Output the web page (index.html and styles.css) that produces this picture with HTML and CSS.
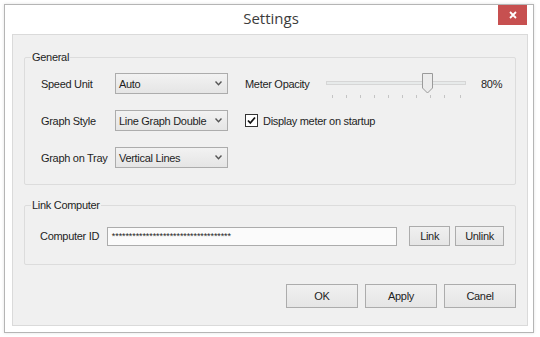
FILE: index.html
```html
<!DOCTYPE html>
<html lang="en">
  <head>
    <meta charset="UTF-8" />
    <title>Settings</title>
    <link rel="stylesheet" href="styles.css">
  </head>
  <body>
    <div class="window">
      <div class="titlebar">
        <span></span>
        <span class="title">Settings</span>
        <button class="close" title="Close">
          <svg width="8" height="8" viewBox="0 0 8 8">
            <path d="M1 1 L7 7 M7 1 L1 7" stroke="#fff" stroke-width="1.8" />
          </svg>
        </button>
      </div>

      <div class="client">
        <fieldset class="group">
          <legend>General</legend>
          <div class="general-grid">
            <span class="label">Speed Unit</span>
            <div class="combo">
              <span>Auto</span>
              <svg class="chev" width="7" height="5" viewBox="0 0 7 5"><path d="M0.5 0.5 L3.5 3.8 L6.5 0.5" fill="none" stroke="#555" stroke-width="1.4" /></svg>
            </div>
            <div class="right-cell">
              <span class="opacity-label">Meter Opacity</span>
              <svg class="slider" width="140" height="26" viewBox="0 0 140 26">
                <rect x="0.5" y="8.5" width="139" height="3" fill="#e7eaea" stroke="#d6d6d6" />
                <g stroke="#c4c4c4" stroke-width="1">
                  <line x1="6.5" y1="22" x2="6.5" y2="25" />
                  <line x1="20.5" y1="22" x2="20.5" y2="25" />
                  <line x1="34.5" y1="22" x2="34.5" y2="25" />
                  <line x1="48.5" y1="22" x2="48.5" y2="25" />
                  <line x1="62.5" y1="22" x2="62.5" y2="25" />
                  <line x1="76.5" y1="22" x2="76.5" y2="25" />
                  <line x1="90.5" y1="22" x2="90.5" y2="25" />
                  <line x1="104.5" y1="22" x2="104.5" y2="25" />
                  <line x1="118.5" y1="22" x2="118.5" y2="25" />
                  <line x1="134.5" y1="22" x2="134.5" y2="25" />
                </g>
                <path d="M96.5 0.5 H106.5 V15 L101.5 20 L96.5 15 Z" fill="#ececec" stroke="#9a9a9a" />
              </svg>
              <span class="percent">80%</span>
            </div>

            <span class="label">Graph Style</span>
            <div class="combo">
              <span>Line Graph Double</span>
              <svg class="chev" width="7" height="5" viewBox="0 0 7 5"><path d="M0.5 0.5 L3.5 3.8 L6.5 0.5" fill="none" stroke="#555" stroke-width="1.4" /></svg>
            </div>
            <div class="right-cell">
              <span class="checkbox">
                <svg width="11" height="11" viewBox="0 0 11 11"><path d="M2 5.5 L4.3 8 L9 2.5" fill="none" stroke="#111" stroke-width="1.8" /></svg>
              </span>
              <span class="check-label">Display meter on startup</span>
            </div>

            <span class="label">Graph on Tray</span>
            <div class="combo">
              <span>Vertical Lines</span>
              <svg class="chev" width="7" height="5" viewBox="0 0 7 5"><path d="M0.5 0.5 L3.5 3.8 L6.5 0.5" fill="none" stroke="#555" stroke-width="1.4" /></svg>
            </div>
            <div class="right-cell"></div>
          </div>
        </fieldset>

        <fieldset class="group link-group">
          <legend>Link Computer</legend>
          <div class="link-row">
            <span class="label id-label">Computer ID</span>
            <div class="textbox">***********************************</div>
            <button class="btn small">Link</button>
            <button class="btn small unlink">Unlink</button>
          </div>
        </fieldset>

        <div class="actions">
          <button class="btn big">OK</button>
          <button class="btn big">Apply</button>
          <button class="btn big">Canel</button>
        </div>
      </div>
    </div>
  </body>
</html>
```

FILE: styles.css
```css
body {
  margin: 0;
  padding: 4px;
  background-color: #fff;
  font-family: 'Liberation Sans', 'DejaVu Sans', sans-serif;
  font-size: 11px;
  letter-spacing: -0.3px;
  color: #1e1e1e;
}

.window {
  width: 530px;
  height: 329px;
  box-sizing: border-box;
  border: 1px solid #b5b5b5;
  background-color: #fff;
  box-shadow: 0 0 3px rgba(0, 0, 0, 0.12);
}

/* title bar */
.titlebar {
  height: 29px;
  display: grid;
  grid-template-columns: 1fr auto 1fr;
  align-items: start;
}

.title {
  font-family: 'Open Sans', 'Noto Sans', sans-serif;
  font-size: 15px;
  letter-spacing: 0;
  line-height: 27px;
  color: #3c3c3c;
  padding-left: 4px;
}

.close {
  justify-self: end;
  margin-right: 6px;
  width: 29px;
  height: 20px;
  border: none;
  padding: 0;
  background-color: #c75050;
  display: flex;
  align-items: center;
  justify-content: center;
}

/* grey client area */
.client {
  margin: 0 5px 0 7px;
  height: 292px;
  box-sizing: border-box;
  border: 1px solid #dadada;
  background-color: #f0f0f0;
  padding: 15px 11px 0 11px;
}

.group {
  margin: 0;
  padding: 9px 0 16px 16px;
  border: 1px solid #dcdcdc;
  border-radius: 2px;
  min-width: 0;
}

.group legend {
  margin-left: -10px;
  padding: 0 1px;
  line-height: 14px;
  color: #1e1e1e;
}

.general-grid {
  display: grid;
  grid-template-columns: 74px 113px auto;
  grid-auto-rows: 21px;
  row-gap: 16px;
  align-items: center;
}

.label {
  white-space: nowrap;
}

.combo {
  height: 21px;
  box-sizing: border-box;
  border: 1px solid #acacac;
  background: linear-gradient(#f2f2f2, #e5e5e5);
  display: flex;
  align-items: center;
  padding: 0 5px 0 3px;
}

.combo span {
  flex: 1;
  white-space: nowrap;
}

.chev {
  margin-bottom: 1px;
}

.right-cell {
  padding-left: 17px;
  display: flex;
  align-items: center;
  height: 21px;
}

.opacity-label {
  width: 81px;
}

.slider {
  align-self: flex-start;
  margin-bottom: -5px;
}

.percent {
  margin-left: 15px;
}

.checkbox {
  width: 13px;
  height: 13px;
  box-sizing: border-box;
  border: 1px solid #333;
  background-color: #fff;
  display: flex;
  align-items: center;
  justify-content: center;
  margin-right: 5px;
}

/* link computer */
.link-group {
  margin-top: 13px;
  padding: 14px 11px 18px 15px;
}

.link-group legend {
  margin-left: -9px;
}

.link-row {
  display: flex;
  align-items: center;
  height: 20px;
}

.id-label {
  width: 67px;
}

.textbox {
  width: 291px;
  height: 19px;
  box-sizing: border-box;
  border: 1px solid #acacac;
  background-color: #fbfbfb;
  font-size: 9px;
  line-height: 17px;
  padding: 0 0 0 4px;
  overflow: hidden;
  white-space: nowrap;
  letter-spacing: -0.1px;
}

.btn {
  font-family: 'Liberation Sans', 'DejaVu Sans', sans-serif;
  font-size: 11px;
  letter-spacing: -0.3px;
  color: #1e1e1e;
  border: 1px solid #acacac;
  background: linear-gradient(#f0f0f0, #e5e5e5);
  padding: 0;
  box-sizing: border-box;
}

.small {
  height: 20px;
  width: 41px;
  margin-left: 12px;
}

.unlink {
  width: 49px;
  margin-left: 5px;
}

.actions {
  display: flex;
  justify-content: flex-end;
  gap: 7px;
  margin-top: 19px;
}

.big {
  width: 72px;
  height: 24px;
}
```
